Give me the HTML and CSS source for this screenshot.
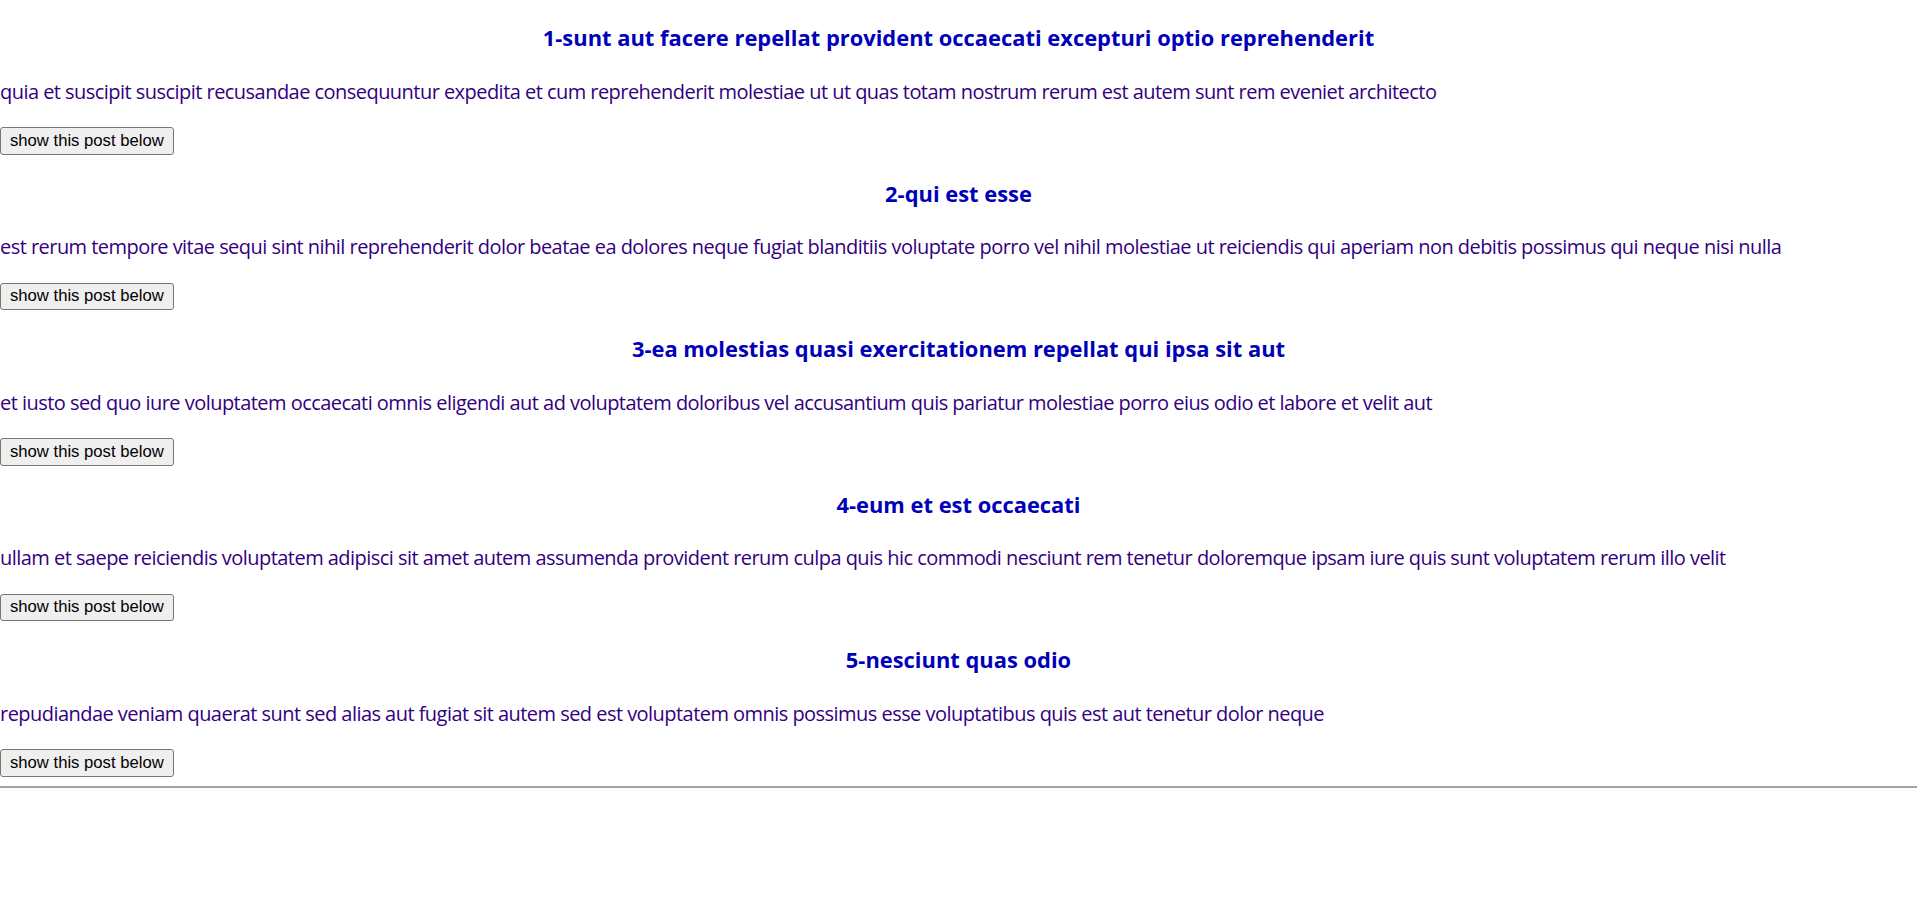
FILE: index.html
```html
<!DOCTYPE html>
<html lang="en">
<head>
<meta charset="utf-8">
<title>Posts</title>
<link rel="stylesheet" href="styles.css">
</head>
<body>
<div class="posts">
  <div class="post">
    <h3 class="post-title">1-sunt aut facere repellat provident occaecati excepturi optio reprehenderit</h3>
    <p class="post-body">quia et suscipit suscipit recusandae consequuntur expedita et cum reprehenderit molestiae ut ut quas totam nostrum rerum est autem sunt rem eveniet architecto</p>
    <button class="show-btn">show this post below</button>
  </div>
  <div class="post">
    <h3 class="post-title">2-qui est esse</h3>
    <p class="post-body">est rerum tempore vitae sequi sint nihil reprehenderit dolor beatae ea dolores neque fugiat blanditiis voluptate porro vel nihil molestiae ut reiciendis qui aperiam non debitis possimus qui neque nisi nulla</p>
    <button class="show-btn">show this post below</button>
  </div>
  <div class="post">
    <h3 class="post-title">3-ea molestias quasi exercitationem repellat qui ipsa sit aut</h3>
    <p class="post-body">et iusto sed quo iure voluptatem occaecati omnis eligendi aut ad voluptatem doloribus vel accusantium quis pariatur molestiae porro eius odio et labore et velit aut</p>
    <button class="show-btn">show this post below</button>
  </div>
  <div class="post">
    <h3 class="post-title">4-eum et est occaecati</h3>
    <p class="post-body">ullam et saepe reiciendis voluptatem adipisci sit amet autem assumenda provident rerum culpa quis hic commodi nesciunt rem tenetur doloremque ipsam iure quis sunt voluptatem rerum illo velit</p>
    <button class="show-btn">show this post below</button>
  </div>
  <div class="post">
    <h3 class="post-title">5-nesciunt quas odio</h3>
    <p class="post-body">repudiandae veniam quaerat sunt sed alias aut fugiat sit autem sed est voluptatem omnis possimus esse voluptatibus quis est aut tenetur dolor neque</p>
    <button class="show-btn">show this post below</button>
  </div>
</div>
<hr class="divider">
</body>
</html>
```
FILE: styles.css
```css
html, body {
  margin: 0;
  padding: 0;
  background: #ffffff;
}

body {
  font-family: "Open Sans", "Noto Sans", sans-serif;
}

.post {
  padding: 23.4px 0 0.8px;
}

.post-title {
  margin: 0 0 23.4px;
  font-size: 21.9px;
  line-height: 30px;
  font-weight: 700;
  text-align: center;
  color: #0000b8;
}

.post-body {
  margin: 0 0 20.5px;
  font-size: 20px;
  line-height: 30px;
  letter-spacing: -0.54px;
  color: #330080;
  white-space: nowrap;
}

.show-btn {
  display: block;
  box-sizing: border-box;
  height: 27.4px;
  margin: 0;
  padding: 0 9px;
  font-family: "Liberation Sans", Arial, sans-serif;
  font-size: 16.67px;
  color: #000000;
  background: #efefef;
  border: 1px solid #767676;
  border-radius: 3px;
}

.divider {
  margin: 9px 0 0;
  border: none;
  border-top: 2px solid #a3a3a3;
  height: 0;
}
```
